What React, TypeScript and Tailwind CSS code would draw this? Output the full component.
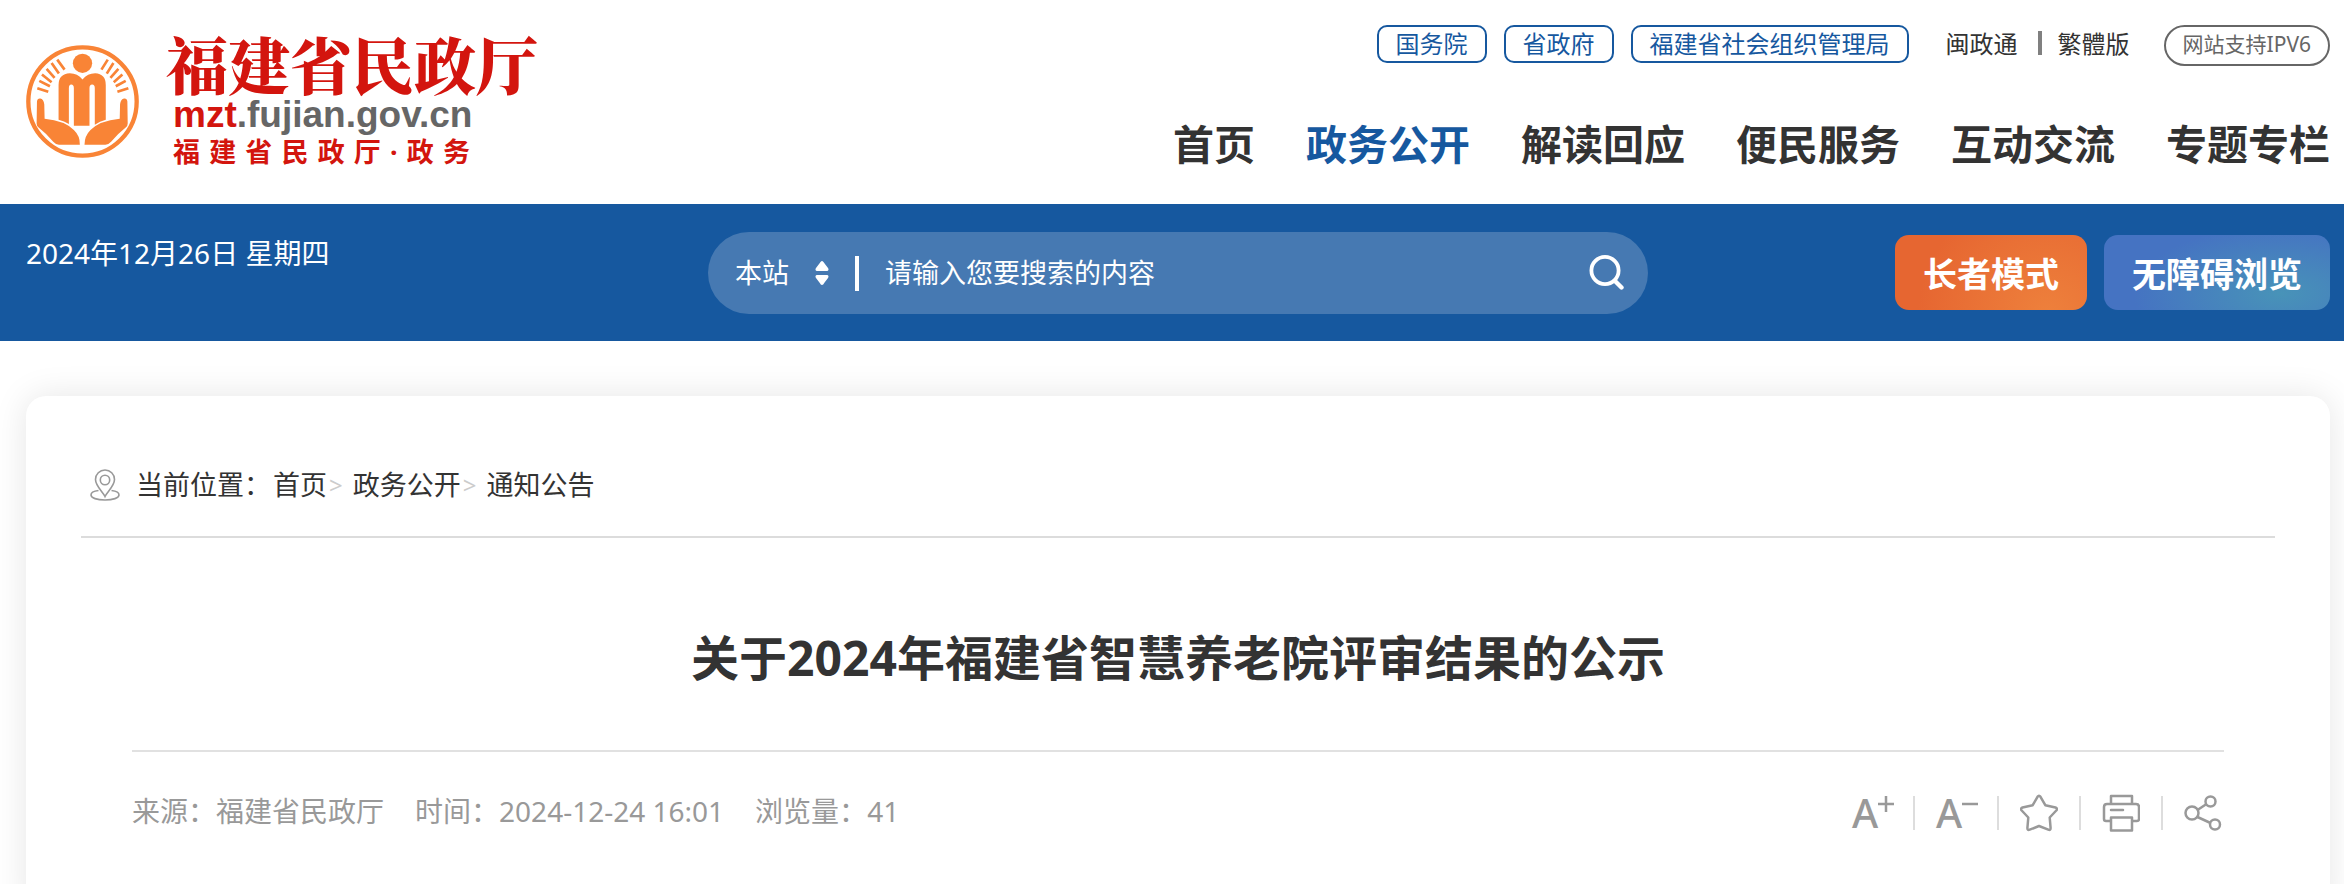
import { useState } from "react";
import { clsx } from "clsx";

const agencyLinks = ["国务院", "省政府", "福建省社会组织管理局"];

const navItems = ["首页", "政务公开", "解读回应", "便民服务", "互动交流", "专题专栏"];

const crumbs = ["首页", "政务公开", "通知公告"];

const meta = [
  { label: "来源", value: "福建省民政厅" },
  { label: "时间", value: "2024-12-24 16:01" },
  { label: "浏览量", value: "41" },
];

export default function App() {
  return (
    <div className="min-h-screen overflow-hidden bg-white font-['Noto_Sans','Noto_Sans_CJK_SC',sans-serif] text-[#333333]">
      <Header />
      <SearchBar />
      <main className="mt-[55px] pl-[26px] pr-[14px]">
        <Article />
      </main>
    </div>
  );
}

function Header() {
  return (
    <header className="flex h-[204px] justify-between pl-[25px] pr-[14px]">
      <a href="#" className="flex items-start gap-[26px]">
        <Emblem />
        <div className="pt-[32px] text-[#d3150e]">
          <div className="font-['Noto_Serif_CJK_SC','Noto_Sans_CJK_SC',serif] text-[62px] font-black leading-[64px]">
            福建省民政厅
          </div>
          <div className="pl-[7px] font-['Liberation_Sans',sans-serif] text-[37px] font-bold leading-[38px]">
            mzt<span className="text-[#666666]">.fujian.gov.cn</span>
          </div>
          <div className="flex w-[304px] justify-between pl-[7px] text-[27px] font-bold leading-[36px]">
            {Array.from("福建省民政厅·政务").map((char, i) => (
              <span key={i}>{char}</span>
            ))}
          </div>
        </div>
      </a>

      <div className="flex flex-col items-end">
        <div className="flex items-start pt-[25px] text-2xl leading-[34px]">
          <div className="flex gap-[17px]">
            {agencyLinks.map((name) => (
              <a
                key={name}
                href="#"
                className="rounded-[10px] border-2 border-[#16589f] px-[17px] text-[#16589f]"
              >
                {name}
              </a>
            ))}
          </div>
          <a href="#" className="ml-[37px] mt-[2px]">
            闽政通
          </a>
          <span className="mx-4 ml-5 mt-[6px] h-6 w-1 bg-[#808080]" />
          <a href="#" className="mt-[2px]">
            繁體版
          </a>
          <a
            href="#"
            className="ml-[34px] rounded-full border-2 border-[#666666] px-[17px] pb-[3px] text-[21px] text-[#666666]"
          >
            网站支持IPV6
          </a>
        </div>

        <nav className="mt-[48px] flex gap-[51px] text-[41px] font-bold leading-[60px]">
          {navItems.map((item) => (
            <a key={item} href="#" className={clsx(item === "政务公开" && "text-[#16589f]")}>
              {item}
            </a>
          ))}
        </nav>
      </div>
    </header>
  );
}

function SearchBar() {
  const [keyword, setKeyword] = useState("");

  return (
    <div className="grid h-[137px] grid-cols-[1fr_940px_1fr] bg-[#16589f] pl-[26px] pr-[14px] text-[27px] text-white">
      <div className="pt-[29px] text-[28px] leading-[40px]">2024年12月26日 星期四</div>

      <form
        className="mt-[28px] flex h-[82px] items-center rounded-full bg-[#4679b2] pl-[27px] pr-[24px]"
        onSubmit={(e) => e.preventDefault()}
      >
        <label htmlFor="scope" className="flex items-center">
          <select
            id="scope"
            aria-label="搜索范围"
            className="w-[80px] appearance-none bg-transparent outline-none"
          >
            <option>本站</option>
          </select>
          <svg viewBox="0 0 14 24" className="h-6 w-[14px]" fill="currentColor" aria-hidden="true">
            <path d="M7 0c1 0 1.5 1 2.200 2L13 7c1 1.500.5 3-1 3H2C.5 10 0 8.500 1 7l3.800-5C5.500 1 6 0 7 0z" />
            <path d="M7 24c1 0 1.500-1 2.200-2L13 17c1-1.500.5-3-1-3H2c-1.500 0-2 1.500-1 3l3.800 5C5.500 23 6 24 7 24z" />
          </svg>
        </label>
        <span className="ml-[26px] h-[35px] w-1 bg-white" />
        <input
          type="text"
          aria-label="搜索"
          placeholder="请输入您要搜索的内容"
          value={keyword}
          onChange={(e) => setKeyword(e.target.value)}
          className="ml-[26px] min-w-0 flex-1 bg-transparent outline-none placeholder:text-white"
        />
        <button type="submit" aria-label="搜索">
          <svg viewBox="0 0 36 36" className="size-9" fill="none" stroke="currentColor" strokeWidth="3.800">
            <circle cx="17" cy="15.500" r="13.600" />
            <path d="M27 26l6.500 6.500" strokeWidth="4.400" strokeLinecap="round" />
          </svg>
        </button>
      </form>

      <div className="flex justify-end gap-[17px] pt-[31px] text-[34px] font-bold">
        <button
          type="button"
          className="h-[75px] rounded-[14px] bg-[radial-gradient(circle_at_80%_110%,#ee813c,#e66631_75%)] px-[28px] pt-[3px]"
        >
          长者模式
        </button>
        <button
          type="button"
          className="h-[75px] rounded-[14px] bg-[radial-gradient(ellipse_65%_90%_at_78%_78%,#4893b8,#4573c2)] px-[28px] pt-[3px]"
        >
          无障碍浏览
        </button>
      </div>
    </div>
  );
}

function Article() {
  return (
    <article className="min-h-[520px] rounded-[20px] bg-white px-[55px] pt-[64px] shadow-[0_0_34px_rgba(0,0,0,0.1)]">
      <div className="flex items-center border-b-2 border-[#dcdcdc] pb-[26px] pl-[9px] text-[27px] leading-[50px]">
        <LocationIcon />
        <span className="ml-[16px] mr-[2px]">当前位置：</span>
        {crumbs.map((crumb, i) => (
          <span key={crumb} className="flex">
            {i > 0 && <span className="pl-[2px] pr-[10px] text-2xl leading-[50px] text-[#cccccc]">&gt;</span>}
            <a href="#">{crumb}</a>
          </span>
        ))}
      </div>

      <div className="px-[51px]">
        <h1 className="border-b-2 border-[#e1e1e1] pb-[55px] pt-[83px] text-center text-5xl font-bold leading-[74px]">
          关于2024年福建省智慧养老院评审结果的公示
        </h1>

        <div className="flex items-center justify-between pt-[34px] text-[28px] leading-[50px] text-[#999999]">
          <div className="flex gap-[31px]">
            {meta.map(({ label, value }) => (
              <span key={label}>
                {label}：{value}
              </span>
            ))}
          </div>
          <Toolbar />
        </div>
      </div>
    </article>
  );
}

function Toolbar() {
  return (
    <div className="flex items-center pr-[2px] pt-[3px]">
      <FontSizeButton label="放大字体" path="M0 8h16M8 0v16" />
      <Divider />
      <FontSizeButton label="缩小字体" path="M0 8h16" />
      <Divider />
      <button type="button" aria-label="收藏">
        <svg viewBox="0 0 38 38" className="size-[38px]" fill="none" stroke="currentColor" strokeWidth="2.500" strokeLinejoin="round">
          <path d="M17.500 2.800Q19 .6 20.500 2.800L25.300 11.200L35.500 13.500Q38 14.500 36.300 16.500L29.700 23.500L30.600 34Q30.600 36.600 28.300 35.700L19 32L9.700 35.700Q7.400 36.600 7.400 34L8.300 23.500L1.700 16.500Q0 14.500 2.500 13.500L12.700 11.200Z" />
        </svg>
      </button>
      <Divider />
      <button type="button" aria-label="打印">
        <svg viewBox="0 0 38 38" className="size-[38px]" fill="none" stroke="currentColor" strokeWidth="2.500" strokeLinejoin="round">
          <path d="M9 10V2h21v8M9 27H4q-2 0-2-2V13q0-3 3-3h29q3 0 3 3v12q0 2-2 2h-5" />
          <path d="M9 23.500h21V36.500H9zM9 16h12" strokeLinecap="round" />
        </svg>
      </button>
      <Divider />
      <button type="button" aria-label="分享">
        <svg viewBox="0 0 38 38" className="size-[38px]" fill="none" stroke="currentColor" strokeWidth="2.500">
          <circle cx="8" cy="19" r="6.500" />
          <circle cx="26.500" cy="7.500" r="5" />
          <circle cx="31" cy="30.500" r="5" />
          <path d="M13.500 16l9-6M13.500 23l13 6" />
        </svg>
      </button>
    </div>
  );
}

function FontSizeButton({ label, path }: { label: string; path: string }) {
  return (
    <button type="button" aria-label={label} className="flex w-10 items-start">
      <span className="text-[40px] font-medium leading-[40px]">A</span>
      <svg
        viewBox="0 0 16 16"
        className="mt-[3px] size-4 shrink-0"
        fill="none"
        stroke="currentColor"
        strokeWidth="2.500"
      >
        <path d={path} />
      </svg>
    </button>
  );
}

function Divider() {
  return <span className="mx-[21px] h-[34px] w-[2px] bg-[#dddddd]" />;
}

function LocationIcon() {
  return (
    <svg viewBox="0 0 30 32" className="h-8 w-[30px]" fill="none" stroke="#999999" strokeWidth="1.600" aria-hidden="true">
      <path d="M15 27.500C13 23 5.500 17 5.500 10.500a9.500 9.500 0 0 1 19 0C24.500 17 17 23 15 27.500z" />
      <circle cx="15" cy="11" r="4.700" />
      <path d="M8.500 21.500C4 22 1 23.500 1 26c0 3 6 5 14 5s14-2 14-5c0-2.500-3-4-7.500-4.500" />
    </svg>
  );
}

function Emblem() {
  return (
    <svg viewBox="46 43 344 346" className="mt-[44px] size-[115px]" fill="#f98436" aria-hidden="true">
      <circle cx="218" cy="216" r="163" fill="none" stroke="#f98436" strokeWidth="13" />
      <circle cx="218" cy="101" r="29" />
      <path d="M146 271V166Q146 133 180 131Q203 131 218 150Q233 131 256 131Q288 133 288 166V271Q270 275 255 286V176Q255 165 247 165Q239 165 239 176V289H192V176Q192 165 184 165Q177 165 177 176V284Q163 275 146 271Z" />
      <path d="M81 216Q82 206 91 207Q101 209 103 224L104 268Q165 274 192 302Q211 320 210 346H147Q138 346 130 337Q108 311 86 294Q80 290 80 282Z" />
      <path d="M353 216Q352 206 343 207Q333 209 331 224L330 268Q269 274 242 302Q224 320 224 346H287Q296 346 304 337Q326 311 348 294Q354 290 354 282Z" />
      <path
        d="M142 90L164 120M125 100L147 132M110 118L134 145M96 135L125 158M88 154L120 170M82 176L115 187M294 90L275 120M311 100L291 132M326 118L302 145M338 135L312 158M348 154L318 170M356 176L323 187"
        fill="none"
        stroke="#f98436"
        strokeWidth="8"
      />
    </svg>
  );
}
